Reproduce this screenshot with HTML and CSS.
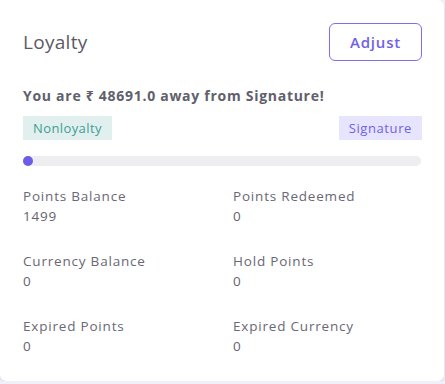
FILE: index.html
```html
<!DOCTYPE html>
<html>
<head>
<meta charset="utf-8">
<link rel="stylesheet" href="styles.css">
</head>
<body>
<div class="card">
  <div class="header">
    <div class="title">Loyalty</div>
    <button class="adjust">Adjust</button>
  </div>
  <div class="away">You are ₹ 48691.0 away from Signature!</div>
  <div class="tiers">
    <span class="badge badge-current">Nonloyalty</span>
    <span class="badge badge-next">Signature</span>
  </div>
  <div class="track"><div class="fill" style="width:10px"></div></div>
  <div class="stats">
    <div class="stat"><div class="label">Points Balance</div><div class="value">1499</div></div>
    <div class="stat"><div class="label">Points Redeemed</div><div class="value">0</div></div>
    <div class="stat"><div class="label">Currency Balance</div><div class="value">0</div></div>
    <div class="stat"><div class="label">Hold Points</div><div class="value">0</div></div>
    <div class="stat"><div class="label">Expired Points</div><div class="value">0</div></div>
    <div class="stat"><div class="label">Expired Currency</div><div class="value">0</div></div>
  </div>
</div>
</body>
</html>
```

FILE: styles.css
```css
* { box-sizing: border-box; }
body {
  margin: 0;
  background: #f1f0f8;
  font-family: "Open Sans", "Noto Sans", sans-serif;
  color: #63626e;
}
.card {
  width: 444px;
  height: 381px;
  background: #fff;
  border-radius: 0 6px 6px 6px;
  box-shadow: 0 1px 2px rgba(120, 110, 200, 0.25);
  padding: 23px 23px 24px 23px;
}
.header {
  display: flex;
  justify-content: space-between;
  align-items: center;
}
.title {
  font-size: 19px;
  letter-spacing: 0.3px;
  color: #5b5a66;
}
.adjust {
  width: 93px;
  height: 38px;
  margin-right: -1px;
  border: 1px solid #7d70f0;
  border-radius: 6px;
  background: #fff;
  color: #6f62e8;
  font-family: inherit;
  font-size: 15px;
  font-weight: 600;
  letter-spacing: 0.8px;
}
.away {
  margin-top: 25px;
  font-size: 14px;
  font-weight: 700;
  line-height: 20px;
  letter-spacing: 0.72px;
  color: #60606c;
}
.tiers {
  margin-top: 10px;
  display: flex;
  justify-content: space-between;
}
.badge {
  height: 24px;
  line-height: 24px;
  padding: 0 10px;
  font-size: 13px;
  letter-spacing: 0.4px;
}
.badge-current { background: #e1f0ef; color: #3f9d93; }
.badge-next { background: #e7e4fd; color: #6e62e8; margin-right: -1px; letter-spacing: 0.6px; }
.track {
  margin-top: 16px;
  height: 10px;
  border-radius: 5px;
  background: #eeeef1;
  width: 398px;
}
.fill {
  height: 10px;
  border-radius: 5px;
  background: #6c5ce9;
}
.stats {
  margin-top: 20px;
  display: grid;
  grid-template-columns: 210px 1fr;
  row-gap: 25px;
}
.label, .value {
  font-size: 13.5px;
  line-height: 20px;
  letter-spacing: 0.8px;
  color: #696874;
}
.value { color: #65646f; }
```
